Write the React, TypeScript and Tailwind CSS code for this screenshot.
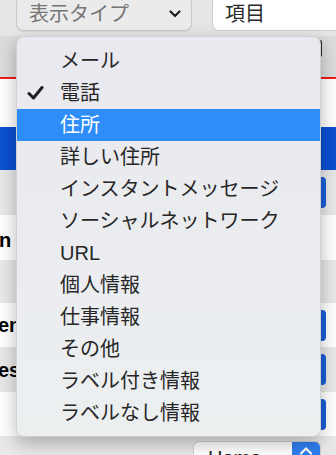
import React from 'react';

const ITEMS = [
  'メール',
  '電話',
  '住所',
  '詳しい住所',
  'インスタントメッセージ',
  'ソーシャルネットワーク',
  'URL',
  '個人情報',
  '仕事情報',
  'その他',
  'ラベル付き情報',
  'ラベルなし情報',
];

const CHECKED = 1;
const ACTIVE = 2;

const FONT = "font-['Helvetica_Neue','Liberation_Sans','Noto_Sans_CJK_JP',sans-serif]";

function Check() {
  return (
    <svg width="17" height="14" viewBox="0 0 17 14" fill="none">
      <path d="M2 7.5 L6.5 12 L15 1.5" stroke="#1f1f1f" strokeWidth="3" strokeLinecap="round" strokeLinejoin="round" />
    </svg>
  );
}

// 右端に少しだけ見えている青いポップアップボタン
function EdgeStepper() {
  return <div className="ml-auto mr-[10px] w-[5px] h-[31px] bg-[#1b5ed8] rounded-r-[4px]" />;
}

export default function App() {
  return (
    <div className={`relative w-[336px] h-[455px] overflow-hidden bg-[#ececec] ${FONT}`}>
      {/* 上部コントロール */}
      <div className="flex items-start h-[36px] bg-[#e6e6e6]">
        <div className="ml-[16px] mt-[-4px] w-[176px] h-[35px] flex items-center justify-between pl-[12px] pr-[10px] bg-[#ebebeb] border border-[#c9c9c9] rounded-[7px] shadow-[0_1px_0_rgba(0,0,0,0.05)]">
          <span className="text-[20px] leading-none text-[#757575]">表示タイプ</span>
          <svg width="12" height="8" viewBox="0 0 12 8" fill="none">
            <path d="M1.5 1.5 L6 6 L10.5 1.5" stroke="#222" strokeWidth="2.2" strokeLinecap="round" strokeLinejoin="round" />
          </svg>
        </div>
        <div className="ml-[20px] mr-[-10px] mt-[-4px] flex-1 h-[35px] flex items-center pl-[12px] bg-white border border-[#cfcfcf] rounded-[7px]">
          <span className="text-[20px] leading-none text-[#2a2a2a]">項目</span>
        </div>
      </div>

      {/* ツールバー */}
      <div className="h-[41px] bg-[#dcdcdc] flex items-start">
        <div className="ml-auto mr-[14px] mt-[4px] w-[4px] h-[17px] bg-[#2b2b2b] rounded-r-[2px]" />
      </div>
      <div className="h-[2px] bg-[#ee1c1c]" />

      {/* リスト */}
      <div className="h-[48px] bg-white" />
      <div className="h-[43px] bg-[#0b50d0]" />
      <div className="h-[45px] bg-[#e8e8e8] flex items-center"><EdgeStepper /></div>
      <div className="h-[45px] bg-white flex items-end pb-[10px]">
        <span className="ml-[-1px] text-[20px] leading-none font-bold text-black">n</span>
      </div>
      <div className="h-[43px] bg-[#e8e8e8]" />
      <div className="h-[44px] bg-white flex items-center">
        <span className="ml-[-2px] text-[20px] leading-none font-bold text-black">en</span>
        <EdgeStepper />
      </div>
      <div className="h-[45px] bg-[#e8e8e8] flex items-center">
        <span className="ml-[-2px] text-[20px] leading-none font-bold text-black">es</span>
        <EdgeStepper />
      </div>
      <div className="h-[44px] bg-white flex items-center"><EdgeStepper /></div>
      <div className="h-[19px] bg-[#e8e8e8] flex items-start">
        <div className="ml-[193px] mt-[5px] w-[128px] h-[30px] flex bg-white border border-[#cfcfcf] rounded-[6px] overflow-hidden">
          <span className="pl-[14px] pt-[6px] text-[20px] leading-none text-[#222]">Home</span>
          <div className="ml-auto w-[28px] h-full bg-[#2f7ff0] flex justify-center pt-[4px]">
            <svg width="14" height="9" viewBox="0 0 14 9" fill="none">
              <path d="M2 7.5 L7 2.5 L12 7.5" stroke="white" strokeWidth="2.2" strokeLinecap="round" strokeLinejoin="round" />
            </svg>
          </div>
        </div>
      </div>

      {/* ポップアップメニュー */}
      <div className="absolute left-[16px] top-[36px] w-[305px] h-[401px] py-[8px] rounded-[8px] border border-[#c4c4c4]/70 bg-gradient-to-b from-[#e9e9ef] to-[#eceff0] shadow-[0_6px_18px_rgba(0,0,0,0.28)]">
        {ITEMS.map((label, i) => (
          <div
            key={label}
            className={`relative h-[32px] flex items-center pl-[43px] text-[20px] leading-none ${
              i === ACTIVE ? 'bg-[#2e8df8] text-white' : 'text-[#262626]'
            }`}
          >
            {i === CHECKED && (
              <span className="absolute left-[10px] top-[9px]"><Check /></span>
            )}
            {label}
          </div>
        ))}
      </div>
    </div>
  );
}
